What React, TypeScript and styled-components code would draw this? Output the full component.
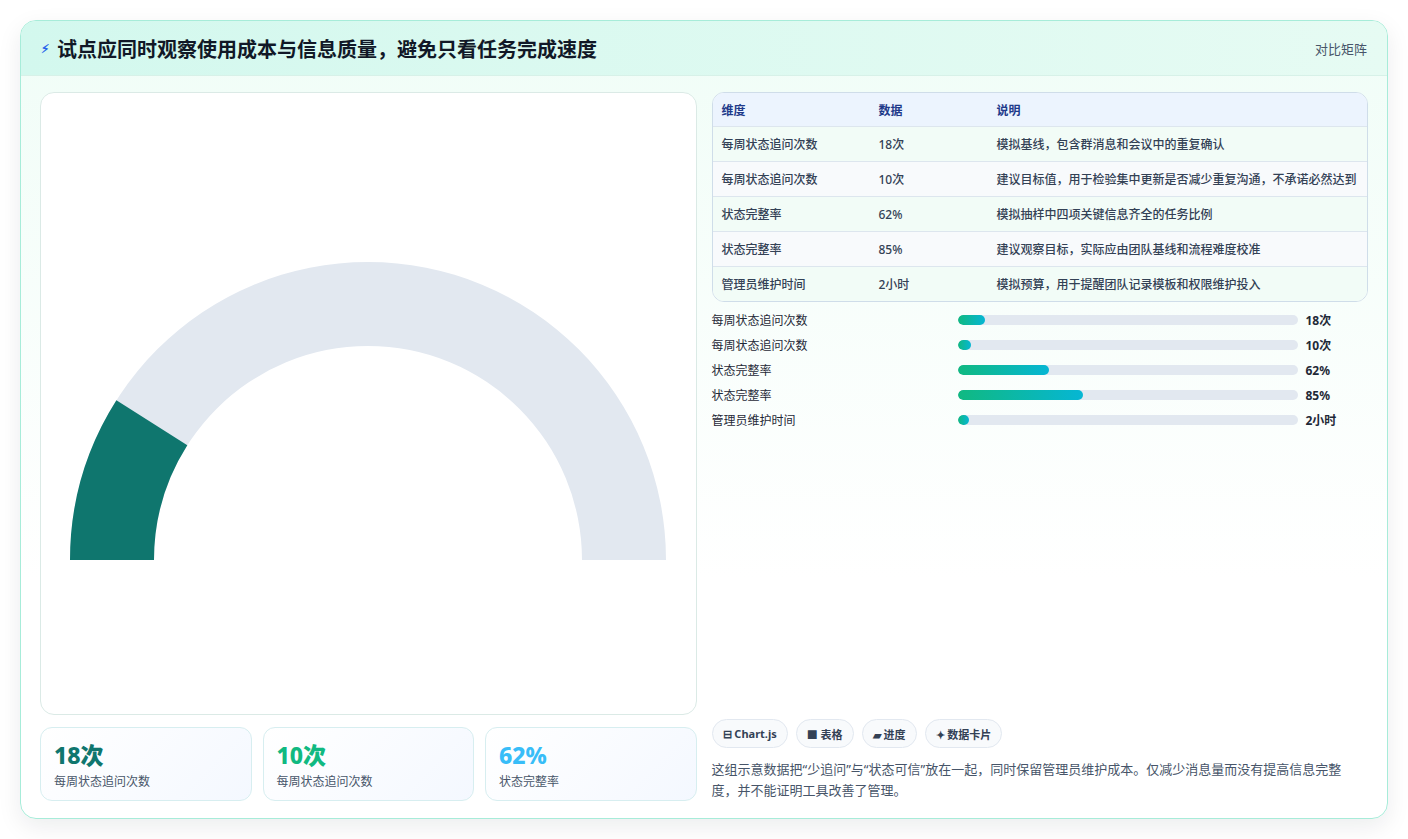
import * as React from 'react';
import styled, { createGlobalStyle } from 'styled-components';

const Global = createGlobalStyle`
  html, body { margin: 0; background: #ffffff; }
  body { font-family: 'Noto Sans', 'Noto Sans CJK SC', sans-serif; color: #1f2937; }
  * { box-sizing: border-box; }
`;

const Page = styled.div`
  padding: 20px;
  height: 839px;
`;

const Card = styled.div`
  height: 799px;
  border: 1px solid #a7ecd9;
  border-radius: 16px;
  background: linear-gradient(180deg, #f0fdf7 0%, #ffffff 70%);
  box-shadow: 0 8px 24px rgba(15, 23, 42, 0.08);
  display: flex;
  flex-direction: column;
  overflow: hidden;
`;

const Header = styled.div`
  height: 55px;
  flex: none;
  display: flex;
  align-items: center;
  justify-content: space-between;
  padding: 0 20px;
  background: linear-gradient(90deg, #d3f8ee 0%, #e6fbf3 100%);
  border-bottom: 1px solid #d7f1e8;
`;

const Title = styled.h1`
  margin: 0;
  font-size: 20px;
  font-weight: 700;
  color: #111827;
  display: flex;
  align-items: center;
  gap: 8px;
`;

const Bolt = styled.span`
  color: #2563eb;
  font-size: 12px;
`;

const HeaderLink = styled.span`
  font-size: 13px;
  color: #475569;
`;

const Body = styled.div`
  flex: 1;
  display: grid;
  grid-template-columns: 1fr 1fr;
  gap: 15px;
  padding: 16px 19px 17px 19px;
  min-height: 0;
`;

const Column = styled.div`
  display: flex;
  flex-direction: column;
  min-height: 0;
`;

const GaugeCard = styled.div`
  flex: 1;
  background: #fff;
  border: 1px solid #dbeae6;
  border-radius: 14px;
  display: flex;
  align-items: center;
  justify-content: center;
`;

const Stats = styled.div`
  margin-top: 12px;
  display: grid;
  grid-template-columns: repeat(3, 1fr);
  gap: 11px;
`;

const Stat = styled.div`
  height: 74px;
  border: 1px solid #d7eef0;
  border-radius: 12px;
  background: linear-gradient(135deg, #ffffff 0%, #f4f8ff 100%);
  padding: 10px 13px;
`;

const StatValue = styled.div<{ $color: string }>`
  font-size: 23px;
  font-weight: 800;
  color: ${p => p.$color};
  line-height: 34px;
`;

const StatLabel = styled.div`
  font-size: 12px;
  color: #475569;
`;

const Table = styled.div`
  border: 1px solid #cfdde9;
  border-radius: 12px;
  overflow: hidden;
  background: #fff;
`;

const Row = styled.div<{ $head?: boolean; $alt?: boolean }>`
  display: grid;
  grid-template-columns: 157px 118px 1fr;
  align-items: center;
  height: ${p => (p.$head ? 33 : 35)}px;
  padding-left: 9px;
  font-size: 12px;
  font-weight: ${p => (p.$head ? 700 : 500)};
  color: ${p => (p.$head ? '#1e3a8a' : '#334155')};
  background: ${p => (p.$head ? '#ecf4fe' : p.$alt ? '#f8fafc' : '#f2fcf7')};
  border-top: ${p => (p.$head ? 'none' : '1px solid #dde6ee')};
  white-space: nowrap;
`;

const Bars = styled.div`
  margin-top: 9px;
  display: flex;
  flex-direction: column;
  gap: 9px;
`;

const BarRow = styled.div`
  display: grid;
  grid-template-columns: 246px 340px 1fr;
  align-items: center;
  height: 16px;
  font-size: 12px;
  color: #1f2937;
`;

const Track = styled.div`
  height: 10px;
  border-radius: 5px;
  background: #e2e8f0;
  overflow: hidden;
`;

const Fill = styled.div`
  height: 100%;
  border-radius: 5px;
  background: linear-gradient(90deg, #10b981, #06b6d4);
`;

const BarValue = styled.span`
  padding-left: 8px;
  font-weight: 700;
`;

const Spacer = styled.div`
  flex: 1;
`;

const Chips = styled.div`
  display: flex;
  gap: 8px;
`;

const Chip = styled.span`
  height: 29px;
  padding: 0 10px;
  border: 1px solid #e2e8f0;
  border-radius: 15px;
  background: #f8fafc;
  font-size: 11px;
  font-weight: 700;
  color: #334155;
  display: flex;
  align-items: center;
  gap: 3px;
`;

const Note = styled.p`
  margin: 11px 0 0;
  padding-right: 18px;
  font-size: 13px;
  line-height: 21px;
  color: #475569;
`;

const rows = [
  ['每周状态追问次数', '18次', '模拟基线，包含群消息和会议中的重复确认'],
  ['每周状态追问次数', '10次', '建议目标值，用于检验集中更新是否减少重复沟通，不承诺必然达到'],
  ['状态完整率', '62%', '模拟抽样中四项关键信息齐全的任务比例'],
  ['状态完整率', '85%', '建议观察目标，实际应由团队基线和流程难度校准'],
  ['管理员维护时间', '2小时', '模拟预算，用于提醒团队记录模板和权限维护投入'],
];

const bars = [
  ['每周状态追问次数', 8, '18次'],
  ['每周状态追问次数', 4, '10次'],
  ['状态完整率', 27, '62%'],
  ['状态完整率', 37, '85%'],
  ['管理员维护时间', 3.5, '2小时'],
] as const;

function Gauge({ ratio }: { ratio: number }) {
  const cx = 298, cy = 298, R = 298, r = 214;
  const a = Math.PI * (1 - ratio);
  const ox = cx + R * Math.cos(a), oy = cy - R * Math.sin(a);
  const ix = cx + r * Math.cos(a), iy = cy - r * Math.sin(a);
  return (
    <svg width="596" height="298" viewBox="0 0 596 298" style={{ marginTop: 14 }}>
      <path d={`M0 298 A${R} ${R} 0 0 1 596 298 L${cx + r} 298 A${r} ${r} 0 0 0 ${cx - r} 298 Z`} fill="#e2e8f0" />
      <path d={`M0 298 A${R} ${R} 0 0 1 ${ox} ${oy} L${ix} ${iy} A${r} ${r} 0 0 0 ${cx - r} 298 Z`} fill="#0f766e" />
    </svg>
  );
}

export default function App() {
  return (
    <Page>
      <Global />
      <Card>
        <Header>
          <Title><Bolt>⚡︎</Bolt>试点应同时观察使用成本与信息质量，避免只看任务完成速度</Title>
          <HeaderLink>对比矩阵</HeaderLink>
        </Header>
        <Body>
          <Column>
            <GaugeCard><Gauge ratio={0.18} /></GaugeCard>
            <Stats>
              <Stat><StatValue $color="#0f766e">18次</StatValue><StatLabel>每周状态追问次数</StatLabel></Stat>
              <Stat><StatValue $color="#10b981">10次</StatValue><StatLabel>每周状态追问次数</StatLabel></Stat>
              <Stat><StatValue $color="#38bdf8">62%</StatValue><StatLabel>状态完整率</StatLabel></Stat>
            </Stats>
          </Column>
          <Column>
            <Table>
              <Row $head><span>维度</span><span>数据</span><span>说明</span></Row>
              {rows.map((r, i) => (
                <Row key={i} $alt={i % 2 === 1}><span>{r[0]}</span><span>{r[1]}</span><span>{r[2]}</span></Row>
              ))}
            </Table>
            <Bars>
              {bars.map((b, i) => (
                <BarRow key={i}>
                  <span>{b[0]}</span>
                  <Track><Fill style={{ width: `${b[1]}%` }} /></Track>
                  <BarValue>{b[2]}</BarValue>
                </BarRow>
              ))}
            </Bars>
            <Spacer />
            <Chips>
              <Chip>⊟ Chart.js</Chip>
              <Chip>■ 表格</Chip>
              <Chip>▰ 进度</Chip>
              <Chip>✦ 数据卡片</Chip>
            </Chips>
            <Note>这组示意数据把“少追问”与“状态可信”放在一起，同时保留管理员维护成本。仅减少消息量而没有提高信息完整度，并不能证明工具改善了管理。</Note>
          </Column>
        </Body>
      </Card>
    </Page>
  );
}
